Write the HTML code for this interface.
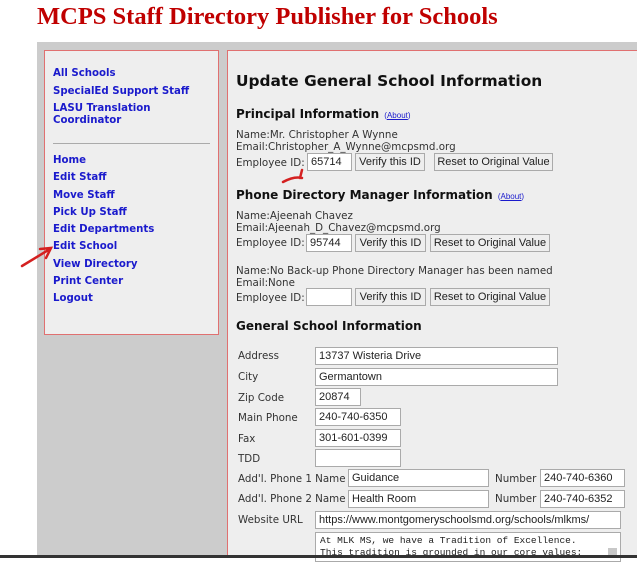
<!DOCTYPE html>
<html><head><meta charset="utf-8"><style>
*{margin:0;padding:0;box-sizing:border-box}
body{width:637px;height:558px;background:#fff;position:relative;overflow:hidden;font-family:"DejaVu Sans",Verdana,sans-serif;color:#222}
.a{position:absolute;white-space:nowrap}
h1.t{position:absolute;left:37px;top:3px;font:bold 24.5px "Liberation Serif",serif;color:#c00000}
#bg{position:absolute;left:37px;top:42px;width:600px;height:514px;background:#cccccc}
#lp{position:absolute;left:44px;top:50px;width:175px;height:285px;background:#eeeeee;border:1px solid #e07070}
#rp{position:absolute;left:227px;top:50px;width:420px;height:506px;background:#eeeeee;border:1px solid #e07070;border-right:none}
.nav{position:absolute;left:53px;font:bold 10.2px "DejaVu Sans",sans-serif;color:#1a1acc;line-height:12px}
.hr{position:absolute;left:53px;top:143px;width:157px;height:1px;background:#aaa}
.t1{font:bold 15.4px "DejaVu Sans",sans-serif;color:#111}
.t2{font:bold 12px "DejaVu Sans",sans-serif;color:#111}
.ab{font:8px "Liberation Sans",sans-serif;color:#1a1acc}
.ab u{color:#1a1acc}
.tx{font:10.3px "DejaVu Sans",sans-serif;color:#333;line-height:12px}
.in{position:absolute;background:#fff;border:1px solid #aaa;font:11px "Liberation Sans",sans-serif;color:#222;padding:1px 3px;line-height:14px;height:18px}
.bt{position:absolute;background:#eee;border:1px solid #aaa;font:11px "Liberation Sans",sans-serif;color:#222;text-align:center;line-height:16px;height:18px}
.lb{font:10.3px "DejaVu Sans",sans-serif;color:#333}
#bot{position:absolute;left:0;top:555px;width:637px;height:3px;background:#333}
</style></head><body>
<h1 class="t">MCPS Staff Directory Publisher for Schools</h1>
<div id="bg"></div>
<div id="lp"></div>
<div id="rp"></div>
<div class="nav" style="top:68px">All Schools</div>
<div class="nav" style="top:86px">SpecialEd Support Staff</div>
<div class="nav" style="top:103px">LASU Translation<br>Coordinator</div>
<div class="hr"></div>
<div class="nav" style="top:155px">Home</div>
<div class="nav" style="top:172px">Edit Staff</div>
<div class="nav" style="top:190px">Move Staff</div>
<div class="nav" style="top:207px">Pick Up Staff</div>
<div class="nav" style="top:224px">Edit Departments</div>
<div class="nav" style="top:241px">Edit School</div>
<div class="nav" style="top:259px">View Directory</div>
<div class="nav" style="top:276px">Print Center</div>
<div class="nav" style="top:293px">Logout</div>

<div class="a t1" style="left:236px;top:72px">Update General School Information</div>
<div class="a" style="left:236px;top:103px"><span class="t2">Principal Information</span> <span class="ab">(<u>About</u>)</span></div>
<div class="a tx" style="left:236px;top:129px">Name:Mr. Christopher A Wynne<br>Email:Christopher_A_Wynne@mcpsmd.org</div>
<div class="a tx" style="left:236px;top:157px">Employee ID:</div>
<div class="in" style="left:307px;top:153px;width:45px">65714</div>
<div class="bt" style="left:355px;top:153px;width:70px">Verify this ID</div>
<div class="bt" style="left:434px;top:153px;width:119px">Reset to Original Value</div>

<div class="a" style="left:236px;top:184px"><span class="t2">Phone Directory Manager Information</span> <span class="ab">(<u>About</u>)</span></div>
<div class="a tx" style="left:236px;top:210px">Name:Ajeenah Chavez<br>Email:Ajeenah_D_Chavez@mcpsmd.org</div>
<div class="a tx" style="left:236px;top:237px">Employee ID:</div>
<div class="in" style="left:306px;top:234px;width:46px">95744</div>
<div class="bt" style="left:355px;top:234px;width:71px">Verify this ID</div>
<div class="bt" style="left:430px;top:234px;width:120px">Reset to Original Value</div>

<div class="a tx" style="left:236px;top:265px">Name:No Back-up Phone Directory Manager has been named<br>Email:None</div>
<div class="a tx" style="left:236px;top:292px">Employee ID:</div>
<div class="in" style="left:306px;top:288px;width:46px"></div>
<div class="bt" style="left:355px;top:288px;width:71px">Verify this ID</div>
<div class="bt" style="left:430px;top:288px;width:120px">Reset to Original Value</div>

<div class="a t2" style="left:236px;top:319px">General School Information</div>
<div class="a lb" style="left:238px;top:350px">Address</div>
<div class="in" style="left:315px;top:347px;width:243px">13737 Wisteria Drive</div>
<div class="a lb" style="left:238px;top:371px">City</div>
<div class="in" style="left:315px;top:368px;width:243px">Germantown</div>
<div class="a lb" style="left:238px;top:392px">Zip Code</div>
<div class="in" style="left:315px;top:388px;width:46px">20874</div>
<div class="a lb" style="left:238px;top:412px">Main Phone</div>
<div class="in" style="left:315px;top:408px;width:86px">240-740-6350</div>
<div class="a lb" style="left:238px;top:433px">Fax</div>
<div class="in" style="left:315px;top:429px;width:86px">301-601-0399</div>
<div class="a lb" style="left:238px;top:453px">TDD</div>
<div class="in" style="left:315px;top:449px;width:86px"></div>
<div class="a lb" style="left:238px;top:473px">Add'l. Phone 1 Name</div>
<div class="in" style="left:348px;top:469px;width:141px">Guidance</div>
<div class="a lb" style="left:495px;top:473px">Number</div>
<div class="in" style="left:540px;top:469px;width:85px">240-740-6360</div>
<div class="a lb" style="left:238px;top:493px">Add'l. Phone 2 Name</div>
<div class="in" style="left:348px;top:490px;width:141px">Health Room</div>
<div class="a lb" style="left:495px;top:493px">Number</div>
<div class="in" style="left:540px;top:490px;width:85px">240-740-6352</div>
<div class="a lb" style="left:238px;top:514px">Website URL</div>
<div class="in" style="left:315px;top:511px;width:306px">https://www.montgomeryschoolsmd.org/schools/mlkms/</div>
<div class="in" style="left:315px;top:532px;width:306px;height:30px;font:9.5px 'Liberation Mono',monospace;line-height:12px;padding:2px 4px">At MLK MS, we have a Tradition of Excellence.<br>This tradition is grounded in our core values:</div>
<div class="a" style="left:608px;top:548px;width:9px;height:10px;background:#c8c8c8"></div>

<svg class="a" style="left:0;top:0" width="637" height="558">
<path d="M22 266 L50 249 M40 249 L51 248 L46 258" stroke="#d42020" stroke-width="2.5" fill="none" stroke-linecap="round"/>
<path d="M283 182 Q294 176 302 178 M300 178 L302 170" stroke="#d42020" stroke-width="2.5" fill="none" stroke-linecap="round"/>
</svg>
<div id="bot"></div>
</body></html>
